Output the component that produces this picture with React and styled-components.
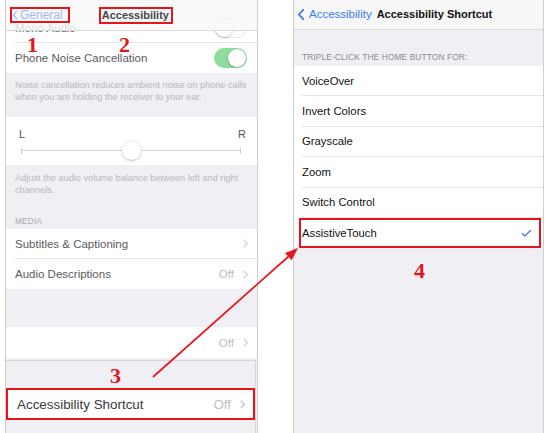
import React from "react";
import styled, { createGlobalStyle } from "styled-components";

const Global = createGlobalStyle`
  html, body { margin: 0; padding: 0; background: #fff; }
  body { font-family: "Liberation Sans", Arial, sans-serif; -webkit-font-smoothing: antialiased; }
  * { box-sizing: border-box; }
`;

const Page = styled.div`
  position: relative;
  display: flex;
  gap: 35px;
  padding-left: 5px;
  width: 548px;
  height: 433px;
  overflow: hidden;
`;

const Phone = styled.section`
  flex: none;
  width: ${(p) => p.$width}px;
  height: 100%;
  display: flex;
  flex-direction: column;
  overflow: hidden;
  background: #efeff4;
  border-left: 1px solid #cfcfd3;
  border-right: 1px solid #cfcfd3;
`;

const NavBar = styled.header`
  position: relative;
  z-index: 1;
  flex: none;
  height: ${(p) => p.$h}px;
  display: flex;
  align-items: center;
  gap: ${(p) => p.$gap}px;
  padding-left: ${(p) => p.$pad}px;
  background: ${(p) => (p.$translucent ? "rgba(248,248,249,0.84)" : "#f7f7f8")};
  border-bottom: 1px solid #dadadd;
`;

const AnnotBox = styled.span`
  display: inline-flex;
  align-items: center;
  height: ${(p) => p.$h}px;
  padding: 0 ${(p) => p.$pr}px 0 ${(p) => p.$pl}px;
  border: 2px solid #e8141c;
`;

const BackText = styled.span`
  font-size: ${(p) => p.$size}px;
  color: ${(p) => p.$color};
  line-height: 1;
`;

const NavTitle = styled.span`
  font-size: 11px;
  font-weight: 700;
  color: ${(p) => p.$color};
  line-height: 1;
  white-space: nowrap;
`;

const BackLink = styled.span`
  display: inline-flex;
  align-items: center;
  gap: ${(p) => p.$gap}px;
`;

const Scroller = styled.div`
  flex: 1;
  min-height: 0;
  display: flex;
  flex-direction: column;
  margin-top: ${(p) => p.$under || 0}px;
`;

const Group = styled.div`
  flex: none;
  background: #fff;
  padding-top: ${(p) => p.$top || 0}px;
`;

const Row = styled.div`
  position: relative;
  display: flex;
  height: ${(p) => p.$h || 30}px;
  padding-left: ${(p) => p.$inset}px;
  background: #fff;
  font-size: ${(p) => p.$size}px;
  color: ${(p) => p.$color};
`;

const RowBody = styled.div`
  flex: 1;
  display: flex;
  align-items: center;
  justify-content: space-between;
  padding-right: ${(p) => p.$pr}px;
  border-bottom: ${(p) => (p.$last ? "none" : "1px solid #e4e4e7")};
`;

const Accessory = styled.span`
  display: flex;
  align-items: center;
  gap: 9px;
`;

const Value = styled.span`
  color: #bebec3;
`;

const HighlightFrame = styled.span`
  position: absolute;
  top: 0;
  bottom: 0;
  left: ${(p) => p.$l}px;
  right: ${(p) => p.$r}px;
  border: 2px solid #e8141c;
  pointer-events: none;
`;

const Toggle = styled.span`
  flex: none;
  width: 33px;
  height: 20px;
  border-radius: 10px;
  padding: ${(p) => (p.$on ? "1px" : "0")};
  display: flex;
  align-items: center;
  justify-content: ${(p) => (p.$on ? "flex-end" : "flex-start")};
  background: ${(p) => (p.$on ? "#8fdd9c" : "#fff")};
  border: ${(p) => (p.$on ? "none" : "1px solid #e6e6e8")};
`;

const Knob = styled.span`
  width: 18px;
  height: 18px;
  border-radius: 50%;
  background: #fff;
  box-shadow: 0 1px 3px rgba(0, 0, 0, 0.18), 0 0 0 0.5px rgba(0, 0, 0, 0.06);
`;

const FooterNote = styled.p`
  flex: none;
  margin: 0;
  padding: ${(p) => p.$pt}px 5px ${(p) => p.$pb}px 9px;
  font-size: 9.2px;
  line-height: 12px;
  color: #b7b7bc;
`;

const SectionHeader = styled.div`
  flex: none;
  display: flex;
  align-items: flex-end;
  height: ${(p) => p.$h}px;
  padding: 0 0 ${(p) => p.$pb}px ${(p) => p.$pl}px;
  font-size: ${(p) => p.$size}px;
  line-height: 10px;
  color: ${(p) => p.$color};
  letter-spacing: 0.1px;
`;

const SliderCell = styled.div`
  flex: none;
  height: 48px;
  background: #fff;
  padding-top: 10px;
  display: flex;
  flex-direction: column;
`;

const SliderLabels = styled.div`
  display: flex;
  justify-content: space-between;
  padding: 0 11px 0 13px;
  font-size: 11px;
  line-height: 14px;
  color: #555;
`;

const Track = styled.div`
  display: flex;
  align-items: center;
  height: 19px;
  padding: 0 16px 0 15px;
`;

const Tick = styled.span`
  width: 1px;
  height: 6px;
  background: #cfcfd2;
`;

const TrackLine = styled.span`
  flex: 1;
  height: 1px;
  background: #d6d6d9;
`;

const Thumb = styled.span`
  flex: none;
  width: 19px;
  height: 19px;
  border-radius: 50%;
  background: #fff;
  box-shadow: 0 1px 3px rgba(0, 0, 0, 0.2), 0 0 0 0.5px rgba(0, 0, 0, 0.08);
`;

const GraySpace = styled.div`
  flex: none;
  height: ${(p) => p.$h}px;
`;

const Sheet = styled.div`
  flex: 1;
  margin: 2px 1px 0 0;
  padding-top: 27px;
  border-top: 1px solid #d7d7da;
  border-right: 1px solid #d7d7da;
  background: #efeff4;
`;

const Marker = styled.span`
  position: absolute;
  left: ${(p) => p.$x}px;
  top: ${(p) => p.$y}px;
  font-family: "Liberation Serif", "Times New Roman", serif;
  font-weight: 700;
  font-size: 22px;
  line-height: 15px;
  color: #e8141c;
  pointer-events: none;
`;

const ArrowLayer = styled.svg`
  position: absolute;
  left: 0;
  top: 0;
  pointer-events: none;
`;

const Chevron = ({ color = "#c7c7cc" }) => (
  <svg width="5" height="9" viewBox="0 0 5 9">
    <polyline points="0.6,0.6 4.3,4.5 0.6,8.4" fill="none" stroke={color} strokeWidth="1.2" />
  </svg>
);

const BackChevron = ({ w, h, color, sw }) => (
  <svg width={w} height={h} viewBox={`0 0 ${w} ${h}`}>
    <polyline
      points={`${w - sw},${sw} ${sw},${h / 2} ${w - sw},${h - sw}`}
      fill="none"
      stroke={color}
      strokeWidth={sw}
      strokeLinecap="round"
      strokeLinejoin="round"
    />
  </svg>
);

const Check = () => (
  <svg width="11" height="8" viewBox="0 0 11 8">
    <polyline points="1,4.2 3.8,7 10,1" fill="none" stroke="#4a7fe3" strokeWidth="1.4" />
  </svg>
);

const LeftPhone = () => (
  <Phone $width={253}>
    <NavBar $h={31} $pad={4} $gap={29} $translucent>
      <AnnotBox $h={16} $pl={0} $pr={5}>
        <BackLink $gap={2}>
          <BackChevron w={6} h={10} color="#a9c0ee" sw={1.4} />
          <BackText $size={12} $color="#9db8ea">General</BackText>
        </BackLink>
      </AnnotBox>
      <AnnotBox $h={17} $pl={1} $pr={2}>
        <NavTitle $color="#46464a">Accessibility</NavTitle>
      </AnnotBox>
    </NavBar>
    <Scroller $under={-31}>
      <Group $top={13}>
        <Row $inset={9} $size={11.5} $color="#5a5a5e">
          <RowBody $pr={10}>
            Mono Audio
            <Toggle>
              <Knob />
            </Toggle>
          </RowBody>
        </Row>
        <Row $inset={9} $size={11.5} $color="#5a5a5e">
          <RowBody $pr={10} $last>
            Phone Noise Cancellation
            <Toggle $on>
              <Knob />
            </Toggle>
          </RowBody>
        </Row>
      </Group>
      <FooterNote $pt={6} $pb={14}>
        Noise cancellation reduces ambient noise on phone calls when you are holding the receiver to your ear.
      </FooterNote>
      <SliderCell>
        <SliderLabels>
          <span>L</span>
          <span>R</span>
        </SliderLabels>
        <Track>
          <Tick />
          <TrackLine />
          <Thumb />
          <TrackLine />
          <Tick />
        </Track>
      </SliderCell>
      <FooterNote $pt={7} $pb={0}>
        Adjust the audio volume balance between left and right channels.
      </FooterNote>
      <SectionHeader $h={33} $pb={3} $pl={9} $size={8.4} $color="#aaaab0">
        MEDIA
      </SectionHeader>
      <Group>
        <Row $inset={9} $size={11.5} $color="#5a5a5e">
          <RowBody $pr={9}>
            Subtitles &amp; Captioning
            <Accessory>
              <Chevron color="#d2d2d6" />
            </Accessory>
          </RowBody>
        </Row>
        <Row $inset={9} $size={11.5} $color="#5a5a5e">
          <RowBody $pr={9} $last>
            Audio Descriptions
            <Accessory>
              <Value>Off</Value>
              <Chevron color="#d2d2d6" />
            </Accessory>
          </RowBody>
        </Row>
      </Group>
      <GraySpace $h={38} />
      <Group>
        <Row $h={31} $inset={9} $size={11.5} $color="#5a5a5e">
          <RowBody $pr={9} $last>
            <span />
            <Accessory>
              <Value>Off</Value>
              <Chevron color="#d2d2d6" />
            </Accessory>
          </RowBody>
        </Row>
      </Group>
      <Sheet>
        <Row $h={32} $inset={11} $size={13.4} $color="#3a3a3c">
          <RowBody $pr={10} $last>
            Accessibility Shortcut
            <Accessory>
              <Value>Off</Value>
              <Chevron color="#c4c4c8" />
            </Accessory>
          </RowBody>
          <HighlightFrame $l={0} $r={0} />
        </Row>
      </Sheet>
    </Scroller>
  </Phone>
);

const shortcutOptions = ["VoiceOver", "Invert Colors", "Grayscale", "Zoom", "Switch Control", "AssistiveTouch"];

const RightPhone = () => (
  <Phone $width={251}>
    <NavBar $h={30} $pad={3} $gap={5}>
      <BackLink $gap={4}>
        <BackChevron w={8} h={13} color="#3a7be8" sw={1.8} />
        <BackText $size={11.5} $color="#3a7be8">Accessibility</BackText>
      </BackLink>
      <NavTitle $color="#111">Accessibility Shortcut</NavTitle>
    </NavBar>
    <Scroller>
      <SectionHeader $h={36} $pb={4} $pl={8} $size={8.4} $color="#8a8a8f">
        TRIPLE-CLICK THE HOME BUTTON FOR:
      </SectionHeader>
      <Group>
        {shortcutOptions.map((label, i) => {
          const selected = label === "AssistiveTouch";
          return (
            <Row key={label} $h={30.4} $inset={8} $size={11.3} $color="#111">
              <RowBody $pr={11} $last={i === shortcutOptions.length - 1}>
                {label}
                {selected && <Check />}
              </RowBody>
              {selected && <HighlightFrame $l={5} $r={2} />}
            </Row>
          );
        })}
      </Group>
    </Scroller>
  </Phone>
);

export default function App() {
  return (
    <>
      <Global />
      <Page>
        <LeftPhone />
        <RightPhone />
        <Marker $x={27} $y={37}>1</Marker>
        <Marker $x={119} $y={37}>2</Marker>
        <Marker $x={110} $y={368}>3</Marker>
        <Marker $x={414} $y={263}>4</Marker>
        <ArrowLayer width="548" height="433" viewBox="0 0 548 433">
          <line x1="153" y1="377" x2="288.5" y2="256.5" stroke="#e8141c" strokeWidth="1.7" />
          <polygon points="298,248 291.6,260.3 285,252.9" fill="#e8141c" />
        </ArrowLayer>
      </Page>
    </>
  );
}
